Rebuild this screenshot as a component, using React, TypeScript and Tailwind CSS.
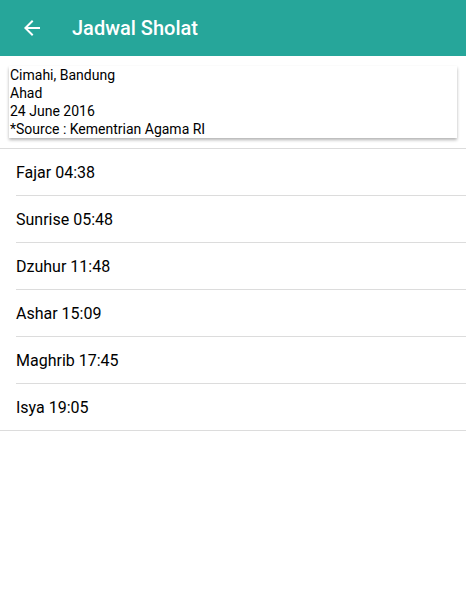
import React from 'react'

const times = [
  { name: 'Fajar', time: '04:38' },
  { name: 'Sunrise', time: '05:48' },
  { name: 'Dzuhur', time: '11:48' },
  { name: 'Ashar', time: '15:09' },
  { name: 'Maghrib', time: '17:45' },
  { name: 'Isya', time: '19:05' },
]

export default function App() {
  return (
    <div className="min-h-screen bg-white font-['Roboto',sans-serif] text-[#212121]">
      {/* toolbar */}
      <header className="h-14 bg-[#26a69a] flex items-center text-white">
        <div className="w-6 h-6 ml-5">
          <svg viewBox="0 0 24 24" width="24" height="24" fill="white">
            <path d="M20 11H7.83l5.59-5.59L12 4l-8 8 8 8 1.41-1.41L7.83 13H20v-2z" />
          </svg>
        </div>
        <h1 className="ml-7 text-[20px] font-medium">Jadwal Sholat</h1>
      </header>

      {/* info card */}
      <div className="px-[9px] pt-[10px] pb-[10px]">
        <div className="bg-white shadow-[0_2px_3px_rgba(0,0,0,0.3)] pl-px text-[14px] leading-[18px] text-black">
          <p>Cimahi, Bandung</p>
          <p>Ahad</p>
          <p>24 June 2016</p>
          <p>*Source : Kementrian Agama RI</p>
        </div>
      </div>

      {/* list */}
      <ul className="border-y border-[#dcdcdc]">
        {times.map((t, i) => (
          <li key={t.name} className="pl-4">
            <div className={`flex items-center pt-[2px] text-[16px] text-black ${i < times.length - 1 ? 'border-b border-[#dcdcdc] h-[47px]' : 'h-[46px]'}`}>
              {t.name} {t.time}
            </div>
          </li>
        ))}
      </ul>
    </div>
  )
}
